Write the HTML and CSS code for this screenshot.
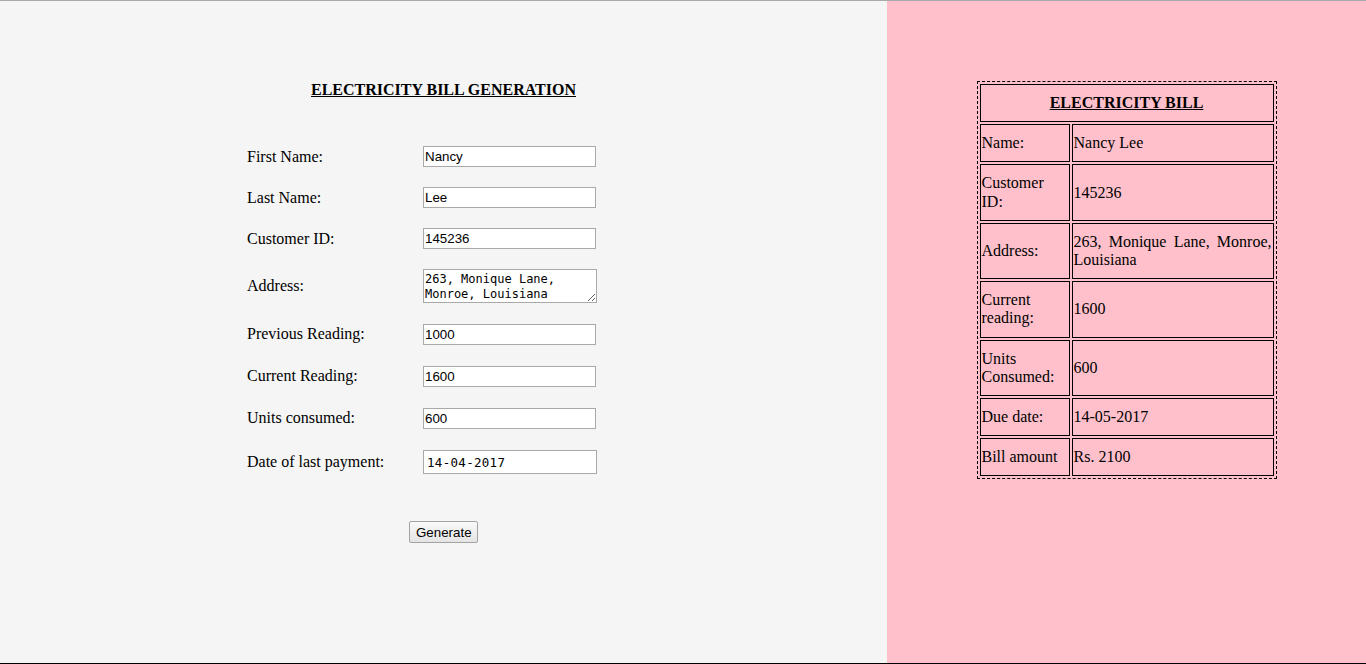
FILE: index.html
```html
<!DOCTYPE html>
<html>
<head>
<meta charset="utf-8">
<title>Electricity Bill</title>
<link rel="stylesheet" href="styles.css">
</head>
<body>
<div class="pane-left">
  <div class="title">ELECTRICITY BILL GENERATION</div>
  <div class="form">
    <label class="lbl">First Name:</label><input class="field" type="text" value="Nancy">
    <label class="lbl">Last Name:</label><input class="field" type="text" value="Lee">
    <label class="lbl">Customer ID:</label><input class="field" type="text" value="145236">
    <label class="lbl">Address:</label><textarea class="area">263, Monique Lane, Monroe, Louisiana</textarea>
    <label class="lbl">Previous Reading:</label><input class="field" type="text" value="1000">
    <label class="lbl">Current Reading:</label><input class="field" type="text" value="1600">
    <label class="lbl">Units consumed:</label><input class="field" type="text" value="600">
    <label class="lbl">Date of last payment:</label><input class="field date" type="text" value="14-04-2017">
  </div>
  <div class="actions"><button class="btn" type="button">Generate</button></div>
</div>
<div class="pane-right">
  <table class="bill">
    <tr><td class="bill-title" colspan="2">ELECTRICITY BILL</td></tr>
    <tr><td class="key">Name:</td><td class="val">Nancy Lee</td></tr>
    <tr><td class="key">Customer ID:</td><td class="val">145236</td></tr>
    <tr><td class="key">Address:</td><td class="val">263, Monique Lane, Monroe, Louisiana</td></tr>
    <tr><td class="key">Current reading:</td><td class="val">1600</td></tr>
    <tr><td class="key">Units Consumed:</td><td class="val">600</td></tr>
    <tr><td class="key">Due date:</td><td class="val">14-05-2017</td></tr>
    <tr><td class="key">Bill amount</td><td class="val">Rs. 2100</td></tr>
  </table>
</div>
</body>
</html>
```
FILE: styles.css
```css
html, body {
  margin: 0;
  padding: 0;
}
body {
  display: flex;
  height: 100vh;
  box-sizing: border-box;
  border-top: 1px solid #a9a9a9;
  border-bottom: 1px solid #000;
  font-family: "Liberation Serif", "Times New Roman", serif;
  font-size: 16px;
  color: #000;
  overflow: hidden;
}
.pane-left {
  width: 887px;
  flex: none;
  background: #f5f5f5;
  padding-top: 79px;
  box-sizing: border-box;
}
.pane-right {
  flex: 1;
  background: #ffc0cb;
  padding-top: 80px;
  box-sizing: border-box;
  display: flex;
  flex-direction: column;
  align-items: center;
}
.title {
  text-align: center;
  font-weight: bold;
  text-decoration: underline;
  line-height: 19px;
}
.form {
  display: grid;
  grid-template-columns: 176px 174px;
  grid-template-rows: 41px 41px 41px 54px 42px 42px 42px 46px;
  align-items: center;
  margin-left: 247px;
  margin-top: 37px;
}
.lbl {
  line-height: 18px;
}
.field {
  box-sizing: border-box;
  width: 173px;
  height: 21px;
  border: 1px solid #a9a9a9;
  background: #fff;
  padding: 1px 1px;
  font-family: "Liberation Sans", Arial, sans-serif;
  font-size: 13.33px;
  color: #000;
  margin: 0;
}
.field.date {
  width: 174px;
  height: 24px;
  padding: 1px 3px;
  font-family: "DejaVu Sans Mono", monospace;
  font-size: 12.5px;
  letter-spacing: 0.3px;
}
.area {
  box-sizing: border-box;
  width: 174px;
  height: 34px;
  border: 1px solid #a9a9a9;
  background: #fff;
  padding: 2px 1px;
  margin: 0;
  font-family: "DejaVu Sans Mono", monospace;
  font-size: 12px;
  line-height: 15px;
  color: #000;
  overflow: hidden;
}
.actions {
  display: flex;
  justify-content: center;
  margin-top: 36px;
}
.btn {
  box-sizing: border-box;
  width: 69px;
  height: 22px;
  padding: 1px 6px;
  border: 1px solid #a3a3a3;
  border-radius: 2px;
  background: linear-gradient(#fafafa, #e4e4e4);
  font-family: "Liberation Sans", Arial, sans-serif;
  font-size: 13.33px;
  color: #000;
}
.bill {
  width: 300px;
  border: 1px dashed #000;
  border-spacing: 2px;
  font-size: 16px;
}
.bill td {
  border: 1px solid #000;
  padding: 9px 1px;
  line-height: 18.2px;
  vertical-align: middle;
}
.bill-title {
  text-align: center;
  font-weight: bold;
  text-decoration: underline;
}
.key {
  width: 86px;
}
.val {
  text-align: justify;
}
```
